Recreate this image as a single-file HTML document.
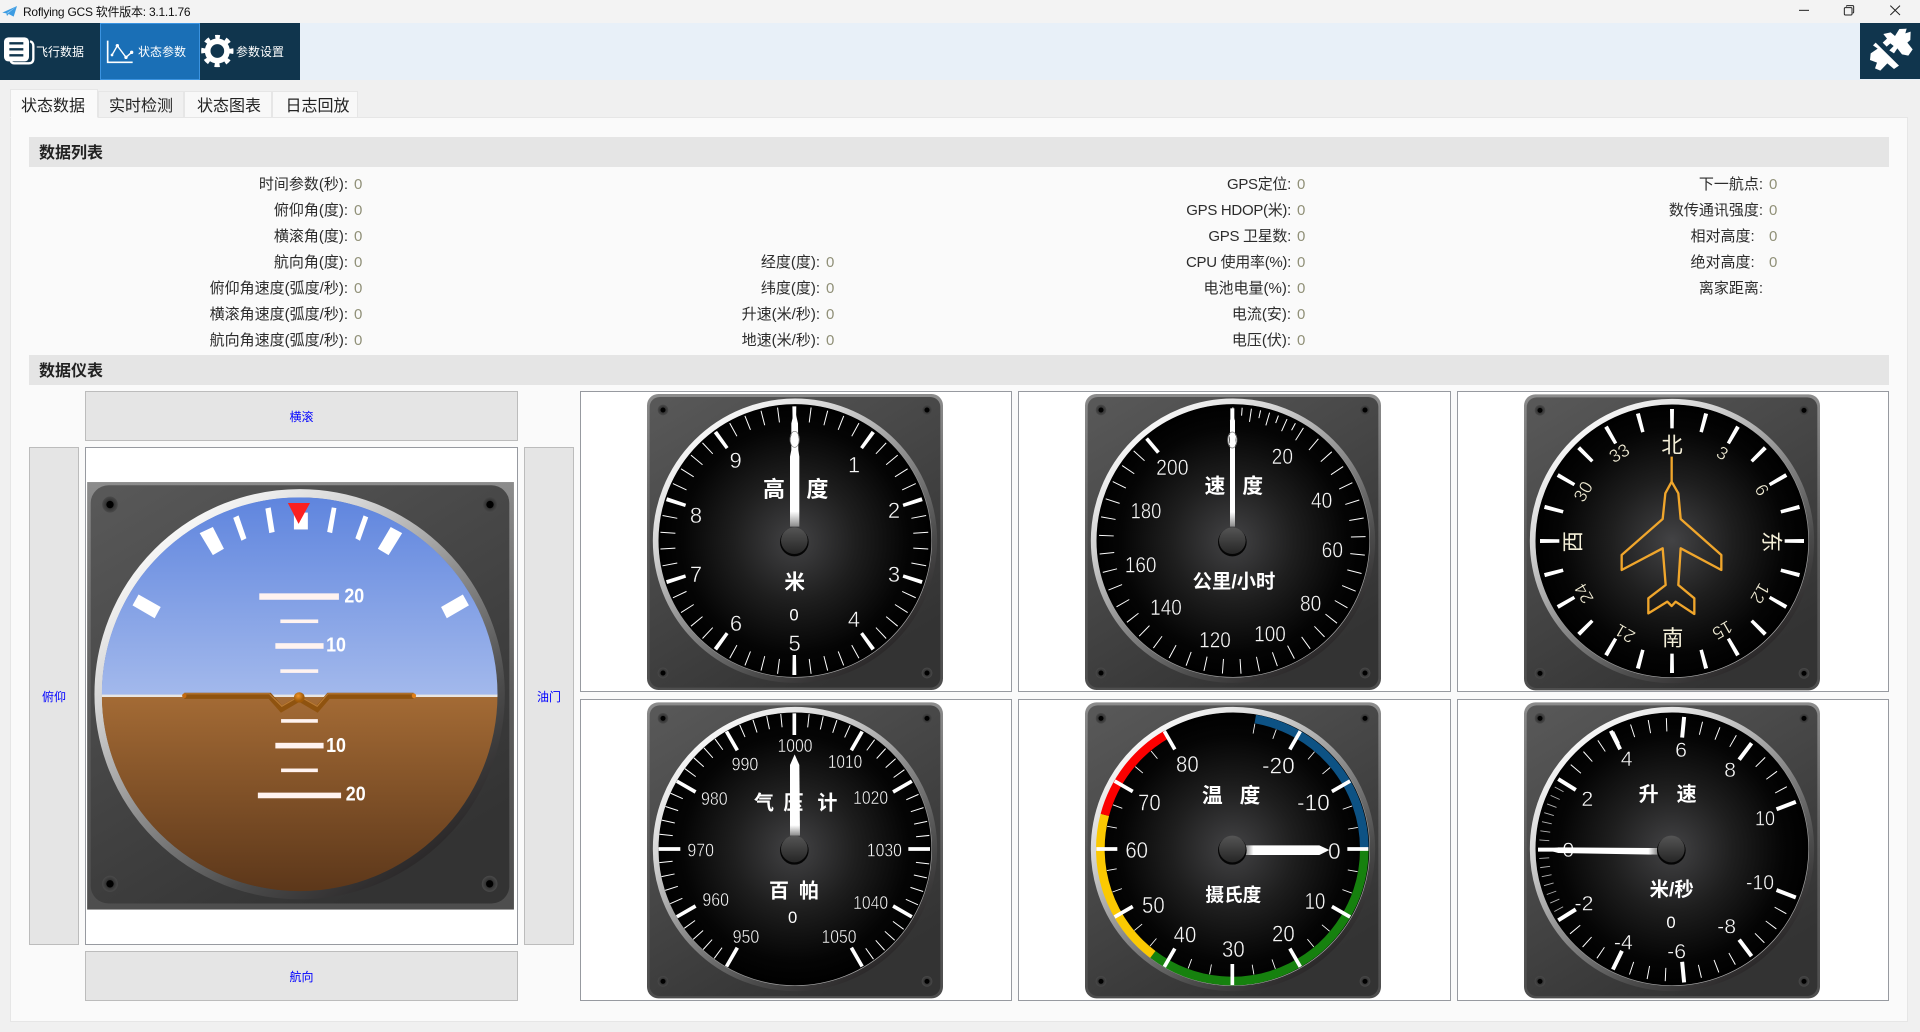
<!DOCTYPE html>
<html lang="zh-CN">
<head>
<meta charset="utf-8">
<title>Roflying GCS</title>
<style>
html,body{margin:0;padding:0;width:1920px;height:1032px;overflow:hidden;background:#f0f0f0;font-family:"Liberation Sans","Noto Sans CJK SC",sans-serif;color:#333}
.a{position:absolute}
.bar{left:0;top:23px;width:1920px;height:57px;background:#e8f0f8}
.btn{top:23px;width:100px;height:57px;background:#10354d}
.on{background:#1a6fb6;box-shadow:inset 0 0 0 1px #3b93e0}
.bt{color:#fff;font-size:12px;line-height:16px;top:44px;white-space:nowrap}
.tab{top:91px;height:26px;line-height:30px;text-align:center;font-size:16px;color:#222;background:#f8f8f8;border:1px solid #e6e6e6;border-bottom:0;box-sizing:border-box}
.panel{left:10px;top:117px;width:1898px;height:905px;background:#fafafa;border:1px solid #e6e6e6;box-sizing:border-box}
.hd{left:29px;width:1860px;height:30px;background:#e5e5e5;font-size:16px;font-weight:700;line-height:34px;text-indent:10px;color:#222}
.r{font-size:15px;line-height:26px;height:26px;text-align:right;left:0;white-space:pre;color:#2c2c2c}
.v{font-size:15px;line-height:26px;height:26px;color:#909078}
.c1{width:348px}.c2{width:820px}.c3{width:1291px}.c4{width:1763px}
.ls{letter-spacing:-.3px}
.v1{left:354px}.v2{left:826px}.v3{left:1297px}.v4{left:1769px}
.b{background:#e5e5e5;border:1px solid #bcbcbc;box-sizing:border-box;color:#00f;font-size:12px;display:flex;align-items:center;justify-content:center}
.f{background:#fff;border:1px solid #979aa0;box-sizing:border-box}
svg.g{position:absolute;overflow:visible}
.tk{fill:none;stroke:#fff}
svg text{font-family:"Liberation Sans","Noto Sans CJK SC",sans-serif;text-anchor:middle;dominant-baseline:central;fill:#fff}
.t{font-weight:700}
.n text{fill:#f6f6f6;stroke:#000;stroke-width:1.2}
.c text{fill:#f4efd8}
.c .th{stroke:#000;stroke-width:1}
</style>
</head>
<body>
<svg width="0" height="0" style="position:absolute">
<defs>
<linearGradient id="pb" x1="0" y1="0" x2="0" y2="1"><stop offset="0" stop-color="#8c8c8c"/><stop offset=".5" stop-color="#5c5c5c"/><stop offset="1" stop-color="#4e4e4e"/></linearGradient>
<linearGradient id="pf" x1="0" y1="0" x2=".6" y2="1"><stop offset="0" stop-color="#595959"/><stop offset="1" stop-color="#333"/></linearGradient>
<linearGradient id="rg" x1=".15" y1=".05" x2=".85" y2=".95"><stop offset="0" stop-color="#fff"/><stop offset=".25" stop-color="#d4d4d4"/><stop offset=".5" stop-color="#8c8c8c"/><stop offset=".75" stop-color="#4c4c4c"/><stop offset="1" stop-color="#232021"/></linearGradient>
<linearGradient id="eg" x1=".2" y1=".1" x2=".8" y2=".9"><stop offset=".4" stop-color="#fff" stop-opacity="0"/><stop offset="1" stop-color="#aaa"/></linearGradient>
<radialGradient id="dg"><stop offset="0" stop-color="#434345"/><stop offset=".45" stop-color="#1e1e1e"/><stop offset=".82" stop-color="#050505"/><stop offset="1" stop-color="#000"/></radialGradient>
<linearGradient id="hg" x1="0" y1="0" x2="0" y2="1"><stop offset="0" stop-color="#555"/><stop offset="1" stop-color="#262626"/></linearGradient>
<linearGradient id="nv" x1="0" y1="0" x2="0" y2="1"><stop offset=".87" stop-color="#fff"/><stop offset="1" stop-color="#8a8a8a"/></linearGradient>
<linearGradient id="nr" x1="0" y1="0" x2="1" y2="0"><stop offset="0" stop-color="#8a8a8a"/><stop offset=".1" stop-color="#fff"/></linearGradient>
<linearGradient id="nl" x1="0" y1="0" x2="1" y2="0"><stop offset=".92" stop-color="#fff"/><stop offset="1" stop-color="#8a8a8a"/></linearGradient>
<linearGradient id="sky" x1="0" y1="0" x2="0" y2="1"><stop offset="0" stop-color="#5f85de"/><stop offset="1" stop-color="#a3b9ec"/></linearGradient>
<linearGradient id="gnd" x1="0" y1="0" x2="0" y2="1"><stop offset="0" stop-color="#a46b35"/><stop offset="1" stop-color="#5c371a"/></linearGradient>
<radialGradient id="sc"><stop offset="0" stop-color="#000"/><stop offset=".42" stop-color="#000"/><stop offset=".5" stop-color="#333"/><stop offset="1" stop-color="#4a4a4a"/></radialGradient>
<radialGradient id="ball" cx=".4" cy=".35"><stop offset="0" stop-color="#f0962a"/><stop offset="1" stop-color="#a05a08"/></radialGradient>
<clipPath id="aic"><ellipse cx="783" cy="782" rx="554" ry="490"/></clipPath>
<g id="base">
<rect x="-444" y="-440" width="888" height="888" rx="34" fill="url(#pb)"/>
<rect x="-436" y="-431" width="872" height="872" rx="30" fill="url(#pf)"/>
<circle cx="-396" cy="-392" r="16" fill="url(#sc)"/><circle cx="396" cy="-392" r="16" fill="url(#sc)"/>
<circle cx="-396" cy="397" r="16" fill="url(#sc)"/><circle cx="396" cy="397" r="16" fill="url(#sc)"/>
<circle r="410" fill="url(#dg)"/>
<circle r="418" fill="none" stroke="url(#rg)" stroke-width="17"/>
<circle r="410" fill="none" stroke="url(#eg)" stroke-width="2"/>
</g>
<g id="hub"><circle cy="4" r="43" fill="#050505"/><circle r="40" fill="url(#hg)"/></g>
</defs>
</svg>

<div class="a" style="left:0;top:0;width:1920px;height:23px;background:#f3f3f3"></div>
<div class="a" style="left:23px;top:4px;font-size:12px;line-height:16px;color:#111;white-space:nowrap;letter-spacing:-.25px">Roflying GCS 软件版本: 3.1.1.76</div>
<div class="a bar"></div>
<div class="a btn" style="left:0"></div>
<div class="a btn on" style="left:100px"></div>
<div class="a btn" style="left:200px"></div>
<div class="a bt" style="left:36px">飞行数据</div>
<div class="a bt" style="left:138px">状态参数</div>
<div class="a bt" style="left:236px">参数设置</div>
<div class="a" style="left:1860px;top:23px;width:60px;height:56px;background:#10354d"></div>
<div class="a" style="left:0;top:80px;width:1920px;height:1px;background:#f0f0f0"></div>

<svg class="g" style="left:0;top:0" width="400" height="130" viewBox="0 0 1200 390">
<path d="M7 38 51 18 41 50 26 42 21 48 19 40Z" fill="#3d9ce2"/>
<path d="M24 40 51 18 19 40Z" fill="#9ad0f5"/>
<path d="M90 124q10 2 10 14v38q0 14-14 14H44q-10 0-12-8" fill="none" stroke="#fff" stroke-width="7"/>
<rect x="12" y="112" width="75" height="72" rx="13" fill="#fff"/>
<path d="M28 130H70M28 148H70M28 166H70" stroke="#10354d" stroke-width="7"/>
<path d="M323 122V187H398" fill="none" stroke="#fff" stroke-width="5"/>
<path d="M336 165 352 137 378 172 395 157" fill="none" stroke="#fff" stroke-width="4"/>
<circle cx="336" cy="165" r="4" fill="#fff"/><circle cx="352" cy="137" r="5" fill="#fff"/><circle cx="378" cy="172" r="5" fill="#fff"/><circle cx="395" cy="157" r="5" fill="#fff"/>
<g transform="translate(652 153)"><circle r="29" fill="none" stroke="#fff" stroke-width="17"/><circle r="40" fill="none" stroke="#fff" stroke-width="17" pathLength="360" stroke-dasharray="21 24" stroke-dashoffset="10.5" transform="rotate(-90)"/></g>
</svg>

<svg class="g" style="left:1780px;top:0" width="140" height="90" viewBox="0 0 420 270">
<path d="M57 31H87" stroke="#222" stroke-width="3"/>
<rect x="193" y="23" width="23" height="22" rx="3" fill="none" stroke="#222" stroke-width="3"/>
<path d="M199 20q0-3 3-3h16q3 0 3 3v16q0 3-3 3" fill="none" stroke="#222" stroke-width="3"/>
<path d="M331 17 360 45M360 17 331 45" stroke="#222" stroke-width="3"/>
<path d="M287 128 357 197 342 207 322 190 301 212 285 205 291 188 270 180 272 160 293 146 279 136Z" fill="#fff"/>
<path d="M310 102 332 97 345 108 358 87 380 86 376 100 392 95 391 120 382 128 398 148 385 167 366 163 352 145 342 160 328 151 341 138 331 130 320 140 308 128 321 116Z" fill="#fff"/>
</svg>

<div class="a panel"></div>
<div class="a tab" style="left:10px;top:89px;height:29px;width:88px;background:#fafafa;line-height:34px;border-bottom:1px solid #fafafa;padding-right:2px">状态数据</div>
<div class="a tab" style="left:98px;width:86px;background:#f0f0f0">实时检测</div>
<div class="a tab" style="left:184px;width:88px;padding-left:2px">状态图表</div>
<div class="a tab" style="left:272px;width:86px;padding-left:5px">日志回放</div>

<div class="a hd" style="top:137px">数据列表</div>
<div class="a hd" style="top:355px">数据仪表</div>

<div class="a r c1" style="top:172px">时间参数(秒):</div><div class="a v v1" style="top:172px">0</div>
<div class="a r c1" style="top:198px">俯仰角(度):</div><div class="a v v1" style="top:198px">0</div>
<div class="a r c1" style="top:224px">横滚角(度):</div><div class="a v v1" style="top:224px">0</div>
<div class="a r c1" style="top:250px">航向角(度):</div><div class="a v v1" style="top:250px">0</div>
<div class="a r c1" style="top:276px">俯仰角速度(弧度/秒):</div><div class="a v v1" style="top:276px">0</div>
<div class="a r c1" style="top:302px">横滚角速度(弧度/秒):</div><div class="a v v1" style="top:302px">0</div>
<div class="a r c1" style="top:328px">航向角速度(弧度/秒):</div><div class="a v v1" style="top:328px">0</div>

<div class="a r c2" style="top:250px">经度(度):</div><div class="a v v2" style="top:250px">0</div>
<div class="a r c2" style="top:276px">纬度(度):</div><div class="a v v2" style="top:276px">0</div>
<div class="a r c2" style="top:302px">升速(米/秒):</div><div class="a v v2" style="top:302px">0</div>
<div class="a r c2" style="top:328px">地速(米/秒):</div><div class="a v v2" style="top:328px">0</div>

<div class="a r c3 ls" style="top:172px">GPS定位:</div><div class="a v v3" style="top:172px">0</div>
<div class="a r c3 ls" style="top:198px">GPS HDOP(米):</div><div class="a v v3" style="top:198px">0</div>
<div class="a r c3 ls" style="top:224px">GPS 卫星数:</div><div class="a v v3" style="top:224px">0</div>
<div class="a r c3 ls" style="top:250px">CPU 使用率(%):</div><div class="a v v3" style="top:250px">0</div>
<div class="a r c3" style="top:276px">电池电量(%):</div><div class="a v v3" style="top:276px">0</div>
<div class="a r c3" style="top:302px">电流(安):</div><div class="a v v3" style="top:302px">0</div>
<div class="a r c3" style="top:328px">电压(伏):</div><div class="a v v3" style="top:328px">0</div>

<div class="a r c4" style="top:172px">下一航点:</div><div class="a v v4" style="top:172px">0</div>
<div class="a r c4" style="top:198px">数传通讯强度:</div><div class="a v v4" style="top:198px">0</div>
<div class="a r c4" style="top:224px">相对高度:  </div><div class="a v v4" style="top:224px">0</div>
<div class="a r c4" style="top:250px">绝对高度:  </div><div class="a v v4" style="top:250px">0</div>
<div class="a r c4" style="top:276px">离家距离:</div>

<div class="a b" style="left:85px;top:391px;width:433px;height:50px">横滚</div>
<div class="a b" style="left:29px;top:447px;width:50px;height:498px">俯仰</div>
<div class="a f" style="left:85px;top:447px;width:433px;height:498px"></div>
<div class="a b" style="left:524px;top:447px;width:50px;height:498px">油门</div>
<div class="a b" style="left:85px;top:951px;width:433px;height:50px">航向</div>

<div class="a f" style="left:580px;top:391px;width:432px;height:301px"></div>
<div class="a f" style="left:1018px;top:391px;width:433px;height:301px"></div>
<div class="a f" style="left:1457px;top:391px;width:432px;height:301px"></div>
<div class="a f" style="left:580px;top:699px;width:432px;height:302px"></div>
<div class="a f" style="left:1018px;top:699px;width:433px;height:302px"></div>
<div class="a f" style="left:1457px;top:699px;width:432px;height:302px"></div>

<!-- Attitude indicator -->
<svg class="g" style="left:20px;top:380px" width="560" height="630" viewBox="0 0 1568 1568" preserveAspectRatio="none">
<rect x="188" y="254" width="1195" height="1064" fill="url(#pb)"/>
<rect x="198" y="262" width="1172" height="1041" rx="50" ry="44" fill="url(#pf)"/>
<ellipse cx="252" cy="310" rx="22" ry="20" fill="url(#sc)"/><ellipse cx="1316" cy="310" rx="22" ry="20" fill="url(#sc)"/>
<ellipse cx="252" cy="1254" rx="22" ry="20" fill="url(#sc)"/><ellipse cx="1315" cy="1254" rx="22" ry="20" fill="url(#sc)"/>
<ellipse cx="783" cy="782" rx="564" ry="500" fill="none" stroke="url(#rg)" stroke-width="21"/>
<g clip-path="url(#aic)">
<rect x="229" y="292" width="1110" height="494" fill="url(#sky)"/>
<rect x="229" y="786" width="1110" height="488" fill="url(#gnd)"/>
<rect x="229" y="783" width="1110" height="6" fill="#e8e6e4"/>
</g>
<g fill="#fff">
<path d="M503 381 540 366 571 420 540 436Z"/><path d="M597 343 612 337 634 394 620 400Z"/><path d="M687 320 702 317 713 378 698 381Z"/>
<rect x="767" y="330" width="39" height="42"/>
<path d="M860 378 873 317 886 319 874 381Z"/><path d="M939 394 962 337 975 342 952 400Z"/><path d="M1002 420 1038 366 1070 381 1032 436Z"/>
<path d="M332 534 394 565 377 593 315 561Z"/><path d="M1240 534 1257 561 1195 593 1179 565Z"/>
</g>
<path d="M750 306H812L780 358Z" fill="#fb2020"/>
<g fill="#fff3f0">
<rect x="670" y="531" width="223" height="16"/><rect x="729" y="596" width="106" height="9"/><rect x="715" y="655" width="135" height="14"/><rect x="729" y="720" width="106" height="9"/>
<rect x="731" y="844" width="103" height="9"/><rect x="715" y="903" width="135" height="14"/><rect x="731" y="967" width="103" height="9"/><rect x="666" y="1027" width="233" height="14"/>
</g>
<g class="t" font-size="50">
<text x="936" y="539">20</text><text x="885" y="661">10</text><text x="885" y="911">10</text><text x="940" y="1032">20</text>
</g>
<path d="M460 786H699L732 819 782 793 832 819 864 786H1102" fill="none" stroke="#8f530f" stroke-width="15"/>
<path d="M460 781H698L733 812 782 787 832 812 862 781H1100" fill="none" stroke="#b87a35" stroke-width="3"/>
<circle cx="460" cy="786" r="6" fill="#c46a10"/><circle cx="1103" cy="786" r="6" fill="#e07f18"/>
<ellipse cx="782" cy="790" rx="15" ry="13" fill="url(#ball)"/>
</svg>

<!-- Altimeter -->
<svg class="g" style="left:630px;top:385px" width="320" height="310" viewBox="0 0 960 930">
<use href="#base" transform="translate(495 467)"/>
<g transform="translate(493 467)">
<circle class="tk" r="380" stroke-width="45" pathLength="360" stroke-dasharray=".45 6.75" stroke-dashoffset=".225" transform="rotate(-90)"/>
<circle class="tk" r="373" stroke-width="60" pathLength="360" stroke-dasharray="1.7 34.3" stroke-dashoffset=".85" transform="rotate(-90)"/>
</g>
<g class="n" font-size="66">
<text x="317" y="227">9</text><text x="672" y="240">1</text><text x="198" y="392">8</text><text x="792" y="376">2</text><text x="198" y="568">7</text><text x="792" y="568">3</text><text x="318" y="715">6</text><text x="672" y="703">4</text><text x="494" y="775">5</text>
</g>
<g class="t" font-size="66"><text x="432" y="313">高</text><text x="562" y="313">度</text></g>
<text class="t" x="494" y="592" font-size="62">米</text>
<text x="492" y="690" font-size="50">0</text>
<g class="n"><text x="494" y="165" font-size="56">0</text></g>
<path d="M494 72 504 115 505 195 508 215V425H480V215L484 195V115Z" fill="url(#nv)"/>
<ellipse cx="494" cy="163" rx="14" ry="24" fill="none" stroke="#777" stroke-width="2"/>
<use href="#hub" transform="translate(493 467)"/>
</svg>

<!-- Airspeed -->
<svg class="g" style="left:1070px;top:385px" width="320" height="310" viewBox="0 0 960 930">
<use href="#base" transform="translate(489 467)"/>
<g transform="translate(487 467)">
<path class="tk" d="M200.3 -320.6A378 378 0 1 1 -240.5 -291.8" stroke-width="44" pathLength="288.5" stroke-dasharray=".45 7.55"/>
<path class="tk" d="M0 -380A380 380 0 0 1 201.4 -322.3" stroke-width="40" pathLength="32" stroke-dasharray=".45 7.55"/>
<path class="tk" d="M0 -388A388 388 0 0 1 205.6 -329" stroke-width="24" pathLength="32" stroke-dasharray=".45 7.55" stroke-dashoffset="-4"/>
<path class="tk" d="M0 -397V-347" stroke-width="12"/>
<path class="tk" d="M0 -400V-345" stroke-width="11" transform="rotate(-40)"/>
</g>
<g class="n" font-size="66">
<text x="637" y="215" textLength="64" lengthAdjust="spacingAndGlyphs">20</text>
<text x="755" y="347" textLength="64" lengthAdjust="spacingAndGlyphs">40</text>
<text x="787" y="495" textLength="64" lengthAdjust="spacingAndGlyphs">60</text>
<text x="722" y="655" textLength="64" lengthAdjust="spacingAndGlyphs">80</text>
<text x="600" y="747" textLength="95" lengthAdjust="spacingAndGlyphs">100</text>
<text x="435" y="765" textLength="95" lengthAdjust="spacingAndGlyphs">120</text>
<text x="288" y="667" textLength="95" lengthAdjust="spacingAndGlyphs">140</text>
<text x="212" y="540" textLength="95" lengthAdjust="spacingAndGlyphs">160</text>
<text x="228" y="378" textLength="92" lengthAdjust="spacingAndGlyphs">180</text>
<text x="307" y="247" textLength="97" lengthAdjust="spacingAndGlyphs">200</text>
</g>
<g class="t" font-size="62"><text x="435" y="305">速</text><text x="548" y="305">度</text></g>
<text class="t" x="492" y="592" font-size="58">公里/小时</text>
<g class="n"><text x="487" y="165" font-size="56">0</text></g>
<path d="M487 85 495 107V425H480V107Z" fill="url(#nv)"/>
<ellipse cx="487" cy="165" rx="14" ry="24" fill="none" stroke="#777" stroke-width="2"/>
<use href="#hub" transform="translate(487 467)"/>
</svg>

<!-- Heading -->
<svg class="g" style="left:1510px;top:385px" width="320" height="310" viewBox="0 0 960 930">
<use href="#base" transform="translate(486 468)"/>
<circle class="tk" r="367" stroke-width="58" pathLength="360" stroke-dasharray="1.75 13.25" stroke-dashoffset=".875" transform="translate(486 468) rotate(-90)"/>
<g class="c">
<g font-size="64"><text x="486" y="182">北</text><text x="488" y="760">南</text>
<text x="190" y="470" transform="rotate(-90 190 470)">西</text><text x="783" y="470" transform="rotate(90 783 470)">东</text></g>
<g font-size="54">
<text class="th" x="637" y="205" transform="rotate(30 637 205)">3</text>
<text class="th" x="755" y="315" transform="rotate(60 755 315)">6</text>
<text class="th" x="750" y="625" transform="rotate(120 750 625)">12</text>
<text class="th" x="637" y="735" transform="rotate(150 637 735)">15</text>
<text class="th" x="345" y="745" transform="rotate(210 345 745)">21</text>
<text class="th" x="222" y="625" transform="rotate(240 222 625)">24</text>
<text class="th" x="220" y="320" transform="rotate(-60 220 320)">30</text>
<text class="th" x="328" y="205" transform="rotate(-30 328 205)">33</text>
</g></g>
<path d="M485 215V290L505 325 512 402 634 510V555L512 490 505 600 553 640V687L497 650 485 663 472 650 415 685V640L467 600 458 490 335 555V510L458 402 466 325 485 290" fill="none" stroke="#f0a62c" stroke-width="7" stroke-linejoin="round"/>
</svg>

<!-- Barometer -->
<svg class="g" style="left:630px;top:695px" width="320" height="310" viewBox="0 0 960 930">
<use href="#base" transform="translate(495 462)"/>
<g transform="translate(493 462)">
<path class="tk" d="M-193.5 335.1A387 387 0 1 1 193.5 335.1" stroke-width="40" pathLength="300" stroke-dasharray=".45 5.55"/>
<g class="tk" stroke-width="11">
<path d="M0 -407V-342" transform="rotate(210)"/><path d="M0 -407V-342" transform="rotate(240)"/><path d="M0 -407V-342" transform="rotate(270)"/><path d="M0 -407V-342" transform="rotate(300)"/><path d="M0 -407V-342" transform="rotate(330)"/><path d="M0 -407V-342"/><path d="M0 -407V-342" transform="rotate(30)"/><path d="M0 -407V-342" transform="rotate(60)"/><path d="M0 -407V-342" transform="rotate(90)"/><path d="M0 -407V-342" transform="rotate(120)"/><path d="M0 -407V-342" transform="rotate(150)"/>
</g></g>
<g class="n" font-size="56">
<text x="495" y="152" textLength="105" lengthAdjust="spacingAndGlyphs">1000</text>
<text x="345" y="207" textLength="80" lengthAdjust="spacingAndGlyphs">990</text>
<text x="645" y="200" textLength="103" lengthAdjust="spacingAndGlyphs">1010</text>
<text x="253" y="310" textLength="80" lengthAdjust="spacingAndGlyphs">980</text>
<text x="722" y="308" textLength="105" lengthAdjust="spacingAndGlyphs">1020</text>
<text x="212" y="465" textLength="80" lengthAdjust="spacingAndGlyphs">970</text>
<text x="763" y="465" textLength="105" lengthAdjust="spacingAndGlyphs">1030</text>
<text x="257" y="613" textLength="80" lengthAdjust="spacingAndGlyphs">960</text>
<text x="722" y="622" textLength="105" lengthAdjust="spacingAndGlyphs">1040</text>
<text x="348" y="725" textLength="80" lengthAdjust="spacingAndGlyphs">950</text>
<text x="627" y="725" textLength="105" lengthAdjust="spacingAndGlyphs">1050</text>
</g>
<g class="t" font-size="60"><text x="402" y="325">气</text><text x="490" y="325">压</text><text x="592" y="325">计</text><text x="447" y="590">百</text><text x="537" y="590">帕</text></g>
<text x="488" y="668" font-size="50">0</text>
<path d="M494 178 508 210 510 422H480L480 210Z" fill="url(#nv)"/>
<use href="#hub" transform="translate(493 462)"/>
</svg>

<!-- Temperature -->
<svg class="g" style="left:1070px;top:695px" width="320" height="310" viewBox="0 0 960 930">
<use href="#base" transform="translate(489 462)"/>
<g transform="translate(487 462)">
<g fill="none" stroke-width="26">
<path d="M68.8 -390A396 396 0 0 1 396 0" stroke="#0d5284"/>
<path d="M396 0A396 396 0 0 1 -238.3 316.3" stroke="#16810e"/>
<path d="M-238.3 316.3A396 396 0 0 1 -382.5 -102.5" stroke="#fbc902"/>
<path d="M-382.5 -102.5A396 396 0 0 1 -198 -343" stroke="#fb0000"/>
</g>
<path class="tk" d="M63.7 -361.4A367 367 0 1 1 -183.5 -317.8" stroke-width="30" pathLength="320" stroke-dasharray=".4 9.6"/>
<g class="tk" stroke-width="11">
<path d="M0 -408V-345" transform="rotate(30)"/><path d="M0 -408V-345" transform="rotate(60)"/><path d="M0 -408V-345" transform="rotate(90)"/><path d="M0 -408V-345" transform="rotate(120)"/><path d="M0 -408V-345" transform="rotate(150)"/><path d="M0 -408V-345" transform="rotate(180)"/><path d="M0 -408V-345" transform="rotate(210)"/><path d="M0 -408V-345" transform="rotate(240)"/><path d="M0 -408V-345" transform="rotate(270)"/><path d="M0 -408V-345" transform="rotate(300)"/><path d="M0 -408V-345" transform="rotate(330)"/>
</g></g>
<g class="n" font-size="68">
<text x="352" y="207" textLength="68" lengthAdjust="spacingAndGlyphs">80</text>
<text x="625" y="212">-20</text>
<text x="238" y="323" textLength="68" lengthAdjust="spacingAndGlyphs">70</text>
<text x="730" y="323">-10</text>
<text x="200" y="465" textLength="68" lengthAdjust="spacingAndGlyphs">60</text>
<text x="793" y="468">0</text>
<text x="250" y="630" textLength="68" lengthAdjust="spacingAndGlyphs">50</text>
<text x="735" y="618" textLength="62" lengthAdjust="spacingAndGlyphs">10</text>
<text x="345" y="718" textLength="68" lengthAdjust="spacingAndGlyphs">40</text>
<text x="640" y="715" textLength="68" lengthAdjust="spacingAndGlyphs">20</text>
<text x="490" y="762" textLength="68" lengthAdjust="spacingAndGlyphs">30</text>
</g>
<g class="t" font-size="62"><text x="427" y="303">温</text><text x="540" y="303">度</text></g>
<text class="t" x="490" y="600" font-size="56">摄氏度</text>
<path d="M525 451H748L778 465 748 480H525Z" fill="url(#nr)"/>
<use href="#hub" transform="translate(487 462)"/>
</svg>

<!-- Vertical speed -->
<svg class="g" style="left:1510px;top:695px" width="320" height="310" viewBox="0 0 960 930">
<use href="#base" transform="translate(486 462)"/>
<g transform="translate(484 464)">
<path class="tk" d="M-318 -199A375 375 0 0 1 350 -134" stroke-width="40" pathLength="127" stroke-dasharray=".45 7.49"/>
<path class="tk" d="M350 134A375 375 0 0 1 -318 199" stroke-width="40" pathLength="127" stroke-dasharray=".45 7.49"/>
<path class="tk" d="M-324 202.5A382 382 0 0 1 -324 -202.5" stroke-width="30" pathLength="64" stroke-dasharray=".4 3.6" stroke-opacity=".7"/>
<g class="tk" stroke-width="12">
<path d="M0 -400V-338" transform="rotate(270)"/><path d="M0 -400V-338" transform="rotate(302)"/><path d="M0 -400V-338" transform="rotate(333)"/><path d="M0 -400V-338" transform="rotate(5.5)"/><path d="M0 -400V-338" transform="rotate(37)"/><path d="M0 -400V-338" transform="rotate(69)"/><path d="M0 -400V-338" transform="rotate(111)"/><path d="M0 -400V-338" transform="rotate(143)"/><path d="M0 -400V-338" transform="rotate(174.5)"/><path d="M0 -400V-338" transform="rotate(206)"/><path d="M0 -400V-338" transform="rotate(238)"/>
</g></g>
<g class="n" font-size="64">
<text x="513" y="165">6</text><text x="350" y="192">4</text><text x="660" y="225">8</text><text x="232" y="312">2</text>
<text x="765" y="370" textLength="60" lengthAdjust="spacingAndGlyphs">10</text><text x="175" y="465">0</text>
<text x="750" y="562" textLength="84" lengthAdjust="spacingAndGlyphs">-10</text><text x="222" y="625">-2</text><text x="650" y="695">-8</text><text x="340" y="742">-4</text><text x="500" y="770">-6</text>
</g>
<g class="t" font-size="60"><text x="416" y="300">升</text><text x="530" y="300">速</text></g>
<text class="t" x="485" y="587" font-size="58">米/秒</text>
<text x="483" y="683" font-size="50">0</text>
<path d="M442 459V479L145 474 105 463 145 457Z" fill="url(#nl)"/>
<use href="#hub" transform="translate(484 462)"/>
</svg>
</body>
</html>
